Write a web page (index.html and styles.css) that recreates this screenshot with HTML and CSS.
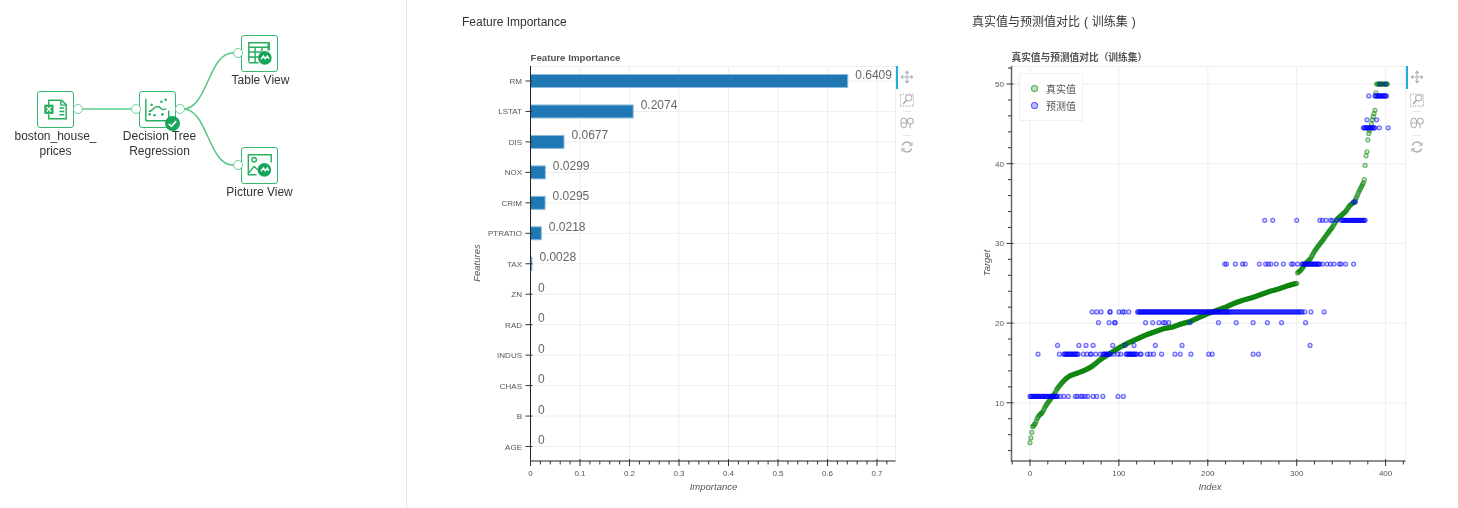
FILE: index.html
```html
<!DOCTYPE html>
<html lang="en">
<head>
  <meta charset="UTF-8" />
  <title>Workflow Results</title>
  <link rel="stylesheet" href="styles.css">
</head>
<body>
  <svg class="icon-defs" width="0" height="0">
    <symbol id="tool-pan" viewBox="0 0 16 16">
      <path d="M8 1.500v13M1.500 8h13M6 3.500l2-2 2 2M6 12.500l2 2 2-2M3.500 6l-2 2 2 2M12.500 6l2 2-2 2" />
    </symbol>
    <symbol id="tool-box" viewBox="0 0 16 16">
      <rect x="0.7" y="1.500" width="14.600" height="13.500" stroke-dasharray="1.300 1.300" />
      <circle cx="10" cy="5.500" r="3.600" />
      <path d="M7.500 8l-3.800 4.500" stroke-width="1.800" />
    </symbol>
    <symbol id="tool-wheel" viewBox="0 0 16 16">
      <ellipse cx="4.300" cy="8" rx="3.300" ry="5.500" />
      <path d="M1 8h6.600M11.500 9.500v4.500" />
      <circle cx="11.800" cy="5.800" r="3.300" />
    </symbol>
    <symbol id="tool-reset" viewBox="0 0 16 16">
      <path d="M2.600 6.500A5.600 5.600 0 0 1 12.800 5M13.400 9.500A5.600 5.600 0 0 1 3.200 11" stroke-width="1.500" />
      <path d="M13.800 2.500v3.500h-3.500M2.200 13.500V10h3.500" />
    </symbol>
  </svg>

  <div class="page">
    <!-- Workflow canvas -->
    <div class="flow">
      <svg class="edges" width="406" height="508">
        <path class="edge-main" d="M81 109H131" />
        <path class="edge" d="M183 109C208 109 208 53 233 53" />
        <path class="edge" d="M183 109C208 109 208 165 233 165" />
      </svg>

      <div class="node node-source">
        <div class="node-box">
          <svg viewBox="0 0 36 36">
            <path class="ic" d="M11 14V8.500H24L29 13V27.500H11V23" />
            <path class="ic" d="M23.500 8.500V13.500H29M22 16.500H27M22 20H27M22 23.500H27" />
            <rect class="ic-fill" x="6.500" y="13" width="9.500" height="9.500" />
            <path class="ic-white" d="M9 15.500L13.500 20M13.500 15.500L9 20" />
          </svg>
          <span class="port port-out"></span>
        </div>
        <div class="node-label">boston_house_<br>prices</div>
      </div>

      <div class="node node-model">
        <div class="node-box">
          <svg viewBox="0 0 36 36">
            <path class="ic" d="M6 29.500V7M6 29.500H29.500V19" />
            <path class="ic" d="M9 20C14 20 13 15 18 15S21 20.500 27 17" />
            <circle class="ic-fill" cx="22" cy="10" r="1.300" />
            <circle class="ic-fill" cx="26.500" cy="8" r="1.300" />
            <circle class="ic-fill" cx="10" cy="23" r="1.300" />
            <circle class="ic-fill" cx="15" cy="24" r="1.300" />
            <circle class="ic-fill" cx="12" cy="13" r="1.300" />
            <circle class="ic-fill" cx="23" cy="23" r="1.300" />
          </svg>
          <span class="port port-in"></span>
          <span class="port port-out"></span>
          <svg class="badge" viewBox="0 0 15 15" width="15" height="15">
            <circle cx="7.500" cy="7.500" r="7.500" />
            <path d="M3.800 7.800L6.500 10.300L11.200 5.200" />
          </svg>
        </div>
        <div class="node-label">Decision Tree<br>Regression</div>
      </div>

      <div class="node node-table">
        <div class="node-box">
          <svg viewBox="0 0 36 36">
            <path class="ic" d="M7 22V7H28V15M7 11.500H28M7 16.500H20M7 21.500H18M7 26.500V21M7 27.500H17M13.500 11.500V27.500M20.500 11.500V16M27 7V15" />
            <circle class="ic-dark" cx="23.500" cy="22.500" r="7" />
            <path class="ic-white" d="M19.500 24L22 20.500L24 23.500L26 20.500L28 23.500" />
          </svg>
          <span class="port port-in"></span>
        </div>
        <div class="node-label">Table View</div>
      </div>

      <div class="node node-picture">
        <div class="node-box">
          <svg viewBox="0 0 36 36">
            <path class="ic" d="M30 15V7H6.500V27.500H15" />
            <path class="ic" d="M6.500 26L12.500 19L18 24" />
            <circle class="ic" cx="12.500" cy="12" r="2.300" />
            <circle class="ic-dark" cx="23" cy="22.500" r="7" />
            <path class="ic-white" d="M19.500 24L22 20.500L24 23.500L26 20.500L27.500 23.500" />
          </svg>
          <span class="port port-in"></span>
        </div>
        <div class="node-label">Picture View</div>
      </div>
    </div>

    <!-- Result charts -->
    <div class="results">
      <div class="chart-panel">
        <h3 class="chart-heading">Feature Importance</h3>
        <div class="chart">
          <svg id="barPlot" class="plot" width="434" height="468"></svg>
          <div class="toolbar">
            <div class="tool tool-active"><svg class="tool-icon"><use href="#tool-pan" /></svg></div>
            <div class="tool"><svg class="tool-icon"><use href="#tool-box" /></svg></div>
            <div class="tool-sep"></div>
            <div class="tool"><svg class="tool-icon"><use href="#tool-wheel" /></svg></div>
            <div class="tool-sep"></div>
            <div class="tool"><svg class="tool-icon"><use href="#tool-reset" /></svg></div>
          </div>
        </div>
      </div>

      <div class="chart-panel">
        <h3 class="chart-heading heading-cjk">真实值与预测值对比 ( 训练集 )</h3>
        <div class="chart">
          <svg id="scatterPlot" class="plot" width="434" height="468"></svg>
          <div class="toolbar">
            <div class="tool tool-active"><svg class="tool-icon"><use href="#tool-pan" /></svg></div>
            <div class="tool"><svg class="tool-icon"><use href="#tool-box" /></svg></div>
            <div class="tool-sep"></div>
            <div class="tool"><svg class="tool-icon"><use href="#tool-wheel" /></svg></div>
            <div class="tool-sep"></div>
            <div class="tool"><svg class="tool-icon"><use href="#tool-reset" /></svg></div>
          </div>
          <div class="legend">
            <div class="legend-item"><span class="legend-dot dot-true"></span>真实值</div>
            <div class="legend-item"><span class="legend-dot dot-pred"></span>预测值</div>
          </div>
        </div>
      </div>
    </div>
  </div>

  <script src="chart.js"></script>
</body>
</html>
```

FILE: styles.css
```css
* {
  box-sizing: border-box;
  margin: 0;
  padding: 0;
}

html, body {
  height: 508px;
  overflow: hidden;
}

body {
  font-family: 'Liberation Sans', Arial, 'Noto Sans CJK SC', sans-serif;
  background: #ffffff;
  color: #333333;
}

.icon-defs {
  position: absolute;
}

.page {
  display: flex;
  height: 508px;
  will-change: transform;
}

/* workflow */
.flow {
  position: relative;
  flex: 0 0 407px;
  border-right: 1px solid #e8e8e8;
}

.edges {
  position: absolute;
  left: 0;
  top: 0;
}

.edge-main {
  fill: none;
  stroke: #84dca6;
  stroke-width: 2;
}

.edge {
  fill: none;
  stroke: #55c785;
  stroke-width: 1.500;
}

.node {
  position: absolute;
  width: 100px;
  display: flex;
  flex-direction: column;
  align-items: center;
}

.node-source { left: 5.500px; top: 91px; }
.node-model { left: 107.500px; top: 91px; }
.node-table { left: 209.500px; top: 35px; }
.node-picture { left: 209.500px; top: 147px; }

.node-model .node-label { margin-left: 4px; }
.node-table .node-label { margin-left: 2px; }

.node-box {
  position: relative;
  width: 37px;
  height: 37px;
  border: 1.500px solid #35b870;
  border-radius: 3px;
  background: #ffffff;
}

.node-box > svg:first-child {
  display: block;
  width: 100%;
  height: 100%;
}

.node-label {
  margin-top: 1px;
  font-size: 12px;
  line-height: 15px;
  color: #333333;
  text-align: center;
  white-space: nowrap;
}

.port {
  position: absolute;
  top: 12px;
  width: 10px;
  height: 10px;
  border: 1.200px solid #6fce95;
  border-radius: 50%;
  background: #ffffff;
}

.port-in { left: -9.500px; }
.port-out { right: -9.500px; }

.badge {
  position: absolute;
  left: 25px;
  top: 24px;
}

.badge circle { fill: #17a55c; }

.badge path {
  fill: none;
  stroke: #ffffff;
  stroke-width: 1.700;
}

.ic {
  fill: none;
  stroke: #27ae60;
  stroke-width: 1.500;
}

.ic-fill { fill: #27ae60; }
.ic-dark { fill: #17a55c; }

.ic-white {
  fill: none;
  stroke: #ffffff;
  stroke-width: 1.400;
}

/* charts */
.results {
  display: flex;
  padding-left: 55px;
}

.chart-panel {
  width: 510px;
  padding-top: 14.500px;
}

.chart-heading {
  font-size: 12px;
  line-height: 15px;
  font-weight: normal;
  color: #333333;
  margin-bottom: 10.500px;
}

.heading-cjk {
  word-spacing: 0.600px;
}

.chart {
  position: relative;
  display: flex;
}

.plot {
  display: block;
}

.toolbar {
  width: 24px;
  margin-top: 26px;
  display: flex;
  flex-direction: column;
  align-items: stretch;
}

.tool {
  height: 22.500px;
  display: flex;
  align-items: center;
  padding-left: 2px;
  border-left: 2px solid transparent;
}

.tool-active {
  border-left-color: #26aae1;
}

.tool-icon {
  width: 14px;
  height: 14px;
  fill: none;
  stroke: #adadad;
  stroke-width: 1.200;
}

.tool-sep {
  width: 8px;
  height: 1px;
  margin-left: 7px;
  background: #e6e6e6;
}

.legend {
  position: absolute;
  left: 47px;
  top: 33px;
  width: 64px;
  height: 48px;
  padding: 6px 0 0 11px;
  background: rgba(255, 255, 255, 0.9);
  border: 1px solid #f0f0f0;
}

.legend-item {
  display: flex;
  align-items: center;
  height: 17px;
  font-size: 10px;
  color: #555555;
}

.legend-dot {
  width: 7px;
  height: 7px;
  margin-right: 8px;
  border-radius: 50%;
}

.dot-true {
  border: 1px solid rgba(0, 128, 0, 0.6);
  background: rgba(0, 128, 0, 0.25);
}

.dot-pred {
  border: 1px solid rgba(0, 0, 255, 0.6);
  background: rgba(0, 0, 255, 0.25);
}

.plot-title {
  font-size: 9.700px;
  font-weight: bold;
  fill: #555555;
}

.grid {
  stroke: #eeeeee;
  stroke-width: 1;
}

.axis-line {
  stroke: #222222;
  stroke-width: 1;
}

.axis-soft {
  stroke: #666666;
  stroke-width: 1.500;
}

.tick {
  stroke: #333333;
  stroke-width: 1;
}

.tick-label {
  font-size: 8px;
  fill: #555555;
}

.axis-label {
  font-size: 9.500px;
  font-style: italic;
  fill: #555555;
}

.bar {
  fill: #1f77b4;
  stroke: #8dbbdc;
  stroke-width: 1;
}

.value-label {
  font-size: 12px;
  fill: #666666;
}

.pt-true {
  fill: rgba(0, 128, 0, 0.2);
  stroke: rgba(0, 128, 0, 0.55);
  stroke-width: 1.200;
}

.pt-pred {
  fill: rgba(0, 0, 255, 0.15);
  stroke: rgba(0, 0, 255, 0.55);
  stroke-width: 1.200;
}
```

FILE: chart.js
```js
// plots are drawn in page coordinates, each svg has its own origin
const TOP = 66, BOTTOM = 461;

function line(x1, y1, x2, y2, cls) {
  return `<line x1="${x1}" y1="${y1}" x2="${x2}" y2="${y2}" class="${cls}" />`;
}

function label(x, y, text, cls, anchor) {
  return `<text x="${x}" y="${y}" class="${cls}" text-anchor="${anchor || "start"}">${text}</text>`;
}

function range(from, to) {
  const out = [];
  for (let i = from; i <= to; i++) out.push(i);
  return out;
}

function drawBars() {
  const rows = [
    ["RM", 0.6409], ["LSTAT", 0.2074], ["DIS", 0.0677], ["NOX", 0.0299],
    ["CRIM", 0.0295], ["PTRATIO", 0.0218], ["TAX", 0.0028], ["ZN", 0],
    ["RAD", 0], ["INDUS", 0], ["CHAS", 0], ["B", 0], ["AGE", 0]
  ];
  const left = 530.5, right = 895.5;
  const xAt = v => left + v * 495;
  const yAt = i => 81 + i * 30.46;
  let s = "";

  s += label(left, 60.5, "Feature Importance", "plot-title");
  s += line(left, TOP + 0.5, right, TOP + 0.5, "grid");
  s += line(right, TOP, right, BOTTOM, "grid");

  range(1, 7).forEach(i => { s += line(xAt(i / 10), TOP, xAt(i / 10), BOTTOM, "grid"); });
  rows.forEach((r, i) => { s += line(left, yAt(i), right, yAt(i), "grid"); });

  rows.forEach((r, i) => {
    if (r[1] > 0) {
      s += `<rect x="${left}" y="${yAt(i) - 6.5}" width="${r[1] * 495}" height="13" class="bar" />`;
    }
    s += label(xAt(r[1]) + 7.5, yAt(i) - 2.5, r[1], "value-label");
  });

  s += line(left, TOP, left, BOTTOM + 0.5, "axis-line");
  s += line(left, BOTTOM, right, BOTTOM, "axis-line");

  rows.forEach((r, i) => {
    s += line(left - 5, yAt(i), left + 2, yAt(i), "tick");
    s += label(522, yAt(i) + 3, r[0], "tick-label", "end");
  });

  range(0, 36).forEach(i => {
    const x = xAt(i / 50);
    if (i % 5 === 0) s += line(x, BOTTOM - 2, x, BOTTOM + 5, "tick");
    else s += line(x, BOTTOM, x, BOTTOM + 3.5, "tick");
  });

  range(0, 7).forEach(i => {
    s += label(xAt(i / 10), 476, i === 0 ? "0" : (i / 10).toFixed(1), "tick-label", "middle");
  });

  s += label(713.5, 490, "Importance", "axis-label", "middle");
  s += `<text transform="translate(480 263) rotate(-90)" class="axis-label" text-anchor="middle">Features</text>`;

  const svg = document.getElementById("barPlot");
  svg.setAttribute("viewBox", "462 40 434 468");
  svg.innerHTML = s;
}

// true target values, sorted, as [index, value] knots
const TRUE_CURVE = [
  [0, 5], [1, 5.6], [2, 6.3], [3, 7], [6, 7.4], [8, 8], [10, 8.4], [14, 8.8], [17, 9.5],
  [20, 10], [22, 10.3], [28, 11.2], [30, 11.7], [35, 12.4], [40, 13], [45, 13.4], [55, 13.8],
  [62, 14.1], [70, 14.6], [80, 15.5], [90, 16.2], [100, 16.9], [110, 17.5], [120, 18],
  [130, 18.5], [140, 18.9], [150, 19.3], [160, 19.5], [170, 19.9], [180, 20.2], [190, 20.7],
  [200, 21.2], [210, 21.6], [220, 22], [230, 22.5], [240, 22.9], [250, 23.2], [260, 23.6],
  [270, 24], [280, 24.3], [290, 24.7], [300, 25], [301, 26.3], [305, 26.7], [310, 27.5],
  [315, 28], [320, 29], [325, 29.8], [330, 30.5], [335, 31.3], [340, 32], [345, 33],
  [350, 33.5], [355, 34], [360, 34.8], [365, 35.2], [370, 36.5], [375, 37.6], [376, 38],
  [377, 39.8], [378, 41], [379, 41.5], [380, 43], [381, 43.8], [383, 44.5], [385, 45.5],
  [388, 46.7], [389, 48.9], [390, 50], [402, 50]
];

// predictions sit on the leaf values of the tree
const PREDICTED = [
  [10.8, [...range(0, 31), 34, 38, 43, 51, 53, 57, 59, 62, 65, 71, 75, 82, 99, 105]],
  [16.1, [9, 33, ...range(38, 53), 54, 60, 64, 68, 69, 74, 79, ...range(82, 90), 94, 99, 102,
    ...range(108, 120), 124, 125, 132, 135, 139, 148, 163, 169, 181, 201, 205, 251, 257]],
  [17.2, [31, 55, 63, 71, 93, 107, 117, 141, 171, 315]],
  [20.05, [77, 89, 95, 96, 130, 138, 145, 150, 152, 156, 180, 212, 232, 251, 267, 283, 310]],
  [21.4, [70, 75, 80, 90, 90, 100, 104, 106, 111, ...range(121, 225),
    ...range(226, 306).filter(i => i % 3 !== 1), 309, 316, 331]],
  [27.4, [219, 221, 231, 239, 242, 258, 265, 268, 271, 277, 285, 294, 296, 301, ...range(306, 326),
    329, 334, 338, 342, 348, 350, 355, 364]],
  [32.9, [264, 273, 300, 326, 329, 333, 338, 340, 345, ...range(350, 377)]],
  [35.2, [364, 366]],
  [44.5, [...range(375, 388), 393, 403]],
  [45.5, [379, 390]],
  [48.5, [381, ...range(388, 401)]],
  [50, [394, 400]]
];

function trueValue(i) {
  for (let k = 1; k < TRUE_CURVE.length; k++) {
    const a = TRUE_CURVE[k - 1], b = TRUE_CURVE[k];
    if (i <= b[0]) return a[1] + (b[1] - a[1]) * (i - a[0]) / (b[0] - a[0]);
  }
  return 50;
}

function drawScatter() {
  const left = 1011.5, right = 1405.5;
  const xAt = v => 1030 + v * 0.889;
  const yAt = v => 84 + (50 - v) * 7.97;
  let s = "";

  s += label(left, 60.5, "真实值与预测值对比（训练集）", "plot-title");
  s += line(left, TOP + 0.5, right, TOP + 0.5, "grid");
  s += line(right, TOP, right, BOTTOM, "grid");

  range(0, 4).forEach(i => { s += line(xAt(i * 100), TOP, xAt(i * 100), BOTTOM, "grid"); });
  range(1, 5).forEach(i => { s += line(left, yAt(i * 10), right, yAt(i * 10), "grid"); });

  range(0, 402).forEach(i => {
    s += `<circle cx="${xAt(i)}" cy="${yAt(trueValue(i))}" r="2" class="pt-true" />`;
  });
  PREDICTED.forEach(level => {
    level[1].forEach(i => {
      s += `<circle cx="${xAt(i)}" cy="${yAt(level[0])}" r="2" class="pt-pred" />`;
    });
  });

  s += line(left, TOP, left, BOTTOM + 0.5, "axis-soft");
  s += line(left, BOTTOM, right, BOTTOM, "axis-line");

  range(-1, 21).forEach(i => {
    const x = xAt(i * 20);
    if (i % 5 === 0) s += line(x, BOTTOM - 2, x, BOTTOM + 5, "tick");
    else s += line(x, BOTTOM, x, BOTTOM + 3.5, "tick");
  });
  range(2, 26).forEach(i => {
    const y = yAt(i * 2);
    if (i % 5 === 0) s += line(left - 5, y, left + 2, y, "tick");
    else s += line(left - 3.5, y, left, y, "tick");
  });

  range(0, 4).forEach(i => { s += label(xAt(i * 100), 476, i * 100, "tick-label", "middle"); });
  range(1, 5).forEach(i => { s += label(1004, yAt(i * 10) + 3, i * 10, "tick-label", "end"); });

  s += label(1210, 490, "Index", "axis-label", "middle");
  s += `<text transform="translate(990 263) rotate(-90)" class="axis-label" text-anchor="middle">Target</text>`;

  const svg = document.getElementById("scatterPlot");
  svg.setAttribute("viewBox", "972 40 434 468");
  svg.innerHTML = s;
}

drawBars();
drawScatter();
```
